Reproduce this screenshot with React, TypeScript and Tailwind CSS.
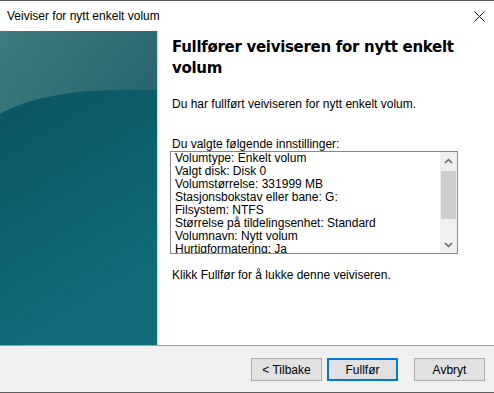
import React from "react";

const ui = { fontFamily: '"Liberation Sans", Arial, sans-serif' };
const head = { fontFamily: '"DejaVu Sans", Verdana, sans-serif' };

const settings = [
  "Volumtype: Enkelt volum",
  "Valgt disk: Disk 0",
  "Volumstørrelse: 331999 MB",
  "Stasjonsbokstav eller bane: G:",
  "Filsystem: NTFS",
  "Størrelse på tildelingsenhet: Standard",
  "Volumnavn: Nytt volum",
  "Hurtigformatering: Ja",
];

function SidePanel() {
  return (
    <svg width="157" height="314" viewBox="0 0 157 314" className="block shrink-0">
      <defs>
        <linearGradient id="base" x1="0" y1="0" x2="0.3" y2="1">
          <stop offset="0" stopColor="#0a525c" />
          <stop offset="0.5" stopColor="#0c5d6a" />
          <stop offset="1" stopColor="#126c7c" />
        </linearGradient>
        <linearGradient id="top" x1="0" y1="0" x2="1" y2="0.4">
          <stop offset="0" stopColor="#3f7c7c" />
          <stop offset="1" stopColor="#2c6670" />
        </linearGradient>
      </defs>
      <rect width="157" height="314" fill="url(#base)" />
      <path d="M0 0 H157 V59 H118 C70 59 25 68 0 83 Z" fill="url(#top)" />
    </svg>
  );
}

function Btn({ label, primary }: { label: string; primary?: boolean }) {
  return (
    <button
      className={
        "h-[23px] w-[71px] bg-[#e1e1e1] text-[12px] text-black " +
        (primary ? "border-2 border-[#0078d7]" : "border border-[#adadad]")
      }
      style={ui}
    >
      {label}
    </button>
  );
}

export default function App() {
  return (
    <div className="flex h-[393px] w-[494px] flex-col overflow-hidden border-y border-[#5f5f5f] bg-white" style={ui}>
      <div className="flex h-[30px] shrink-0 items-center justify-between pl-[7px] pr-[8px]">
        <span className="text-[12px] text-black">Veiviser for nytt enkelt volum</span>
        <svg width="11" height="11" viewBox="0 0 11 11" className="mr-[1px]">
          <path d="M0.5 0.5 L10.5 10.5 M10.5 0.5 L0.5 10.5" stroke="#111" strokeWidth="1" />
        </svg>
      </div>

      <div className="flex h-[314px] shrink-0">
        <SidePanel />
        <div className="h-full w-[3px] shrink-0 bg-gradient-to-r from-[#d8d8d8] to-white" />
        <div className="flex flex-1 flex-col pl-[12px] pr-[30px]">
          <h1 className="mt-[6px] text-[15px] font-bold leading-[21px] tracking-[-0.3px] text-black" style={head}>
            Fullfører veiviseren for nytt enkelt volum
          </h1>
          <p className="mt-[18px] text-[12px] leading-[15px] text-black">Du har fullført veiviseren for nytt enkelt volum.</p>
          <p className="mt-[25px] text-[12px] leading-[15px] text-black">Du valgte følgende innstillinger:</p>
          <div className="-ml-[2px] -mt-[1px] flex h-[103px] w-[288px] border border-[#828790]">
            <div className="flex-1 overflow-hidden pl-[4px]">
              {settings.map((s) => (
                <div key={s} className="whitespace-nowrap text-[12px] leading-[13px] text-black">
                  {s}
                </div>
              ))}
            </div>
            <div className="flex w-[17px] flex-col bg-[#f0f0f0]">
              <div className="flex h-[17px] items-center justify-center">
                <svg width="9" height="6" viewBox="0 0 9 6">
                  <path d="M1 5 L4.5 1.5 L8 5" fill="none" stroke="#606060" strokeWidth="1.5" />
                </svg>
              </div>
              <div className="mx-[1px] mt-[2px] h-[48px] bg-[#cdcdcd]" />
              <div className="flex-1" />
              <div className="flex h-[17px] items-center justify-center">
                <svg width="9" height="6" viewBox="0 0 9 6">
                  <path d="M1 1 L4.5 4.5 L8 1" fill="none" stroke="#606060" strokeWidth="1.5" />
                </svg>
              </div>
            </div>
          </div>
          <p className="mt-[14px] text-[12px] leading-[15px] text-black">Klikk Fullfør for å lukke denne veiviseren.</p>
        </div>
      </div>

      <div className="h-px shrink-0 bg-[#a0a0a0]" />
      <div className="flex flex-1 items-start justify-end gap-[5px] bg-[#f0f0f0] pr-[9px] pt-[12px]">
        <Btn label="< Tilbake" />
        <Btn label="Fullfør" primary />
        <div className="w-[6px]" />
        <Btn label="Avbryt" />
      </div>
    </div>
  );
}
